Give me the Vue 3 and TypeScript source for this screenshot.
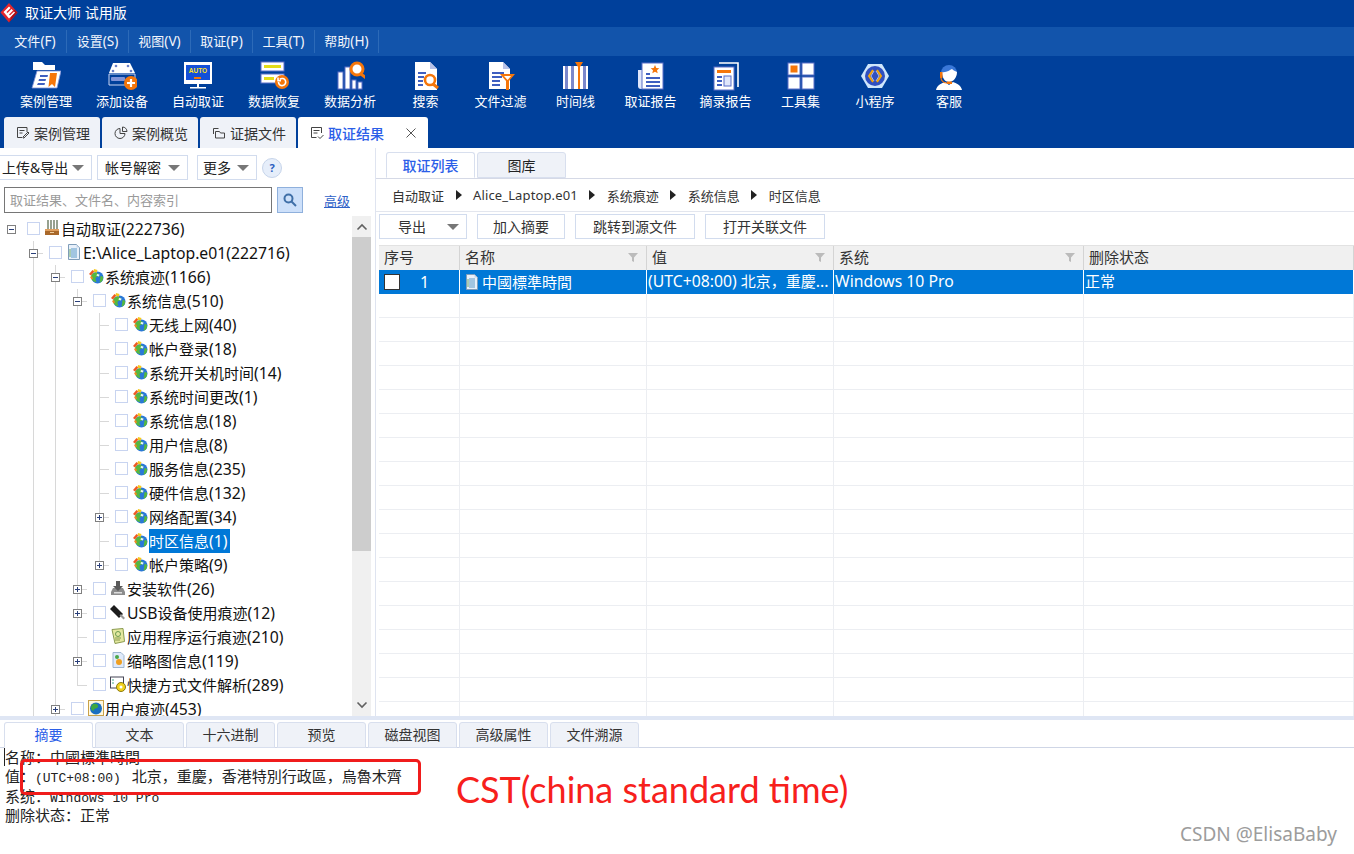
<script setup lang="ts">
interface TreeRow {
  label: string
  depth: number
  exp?: 'minus' | 'plus'
  icon: string
  last?: boolean
  selected?: boolean
}

const levels = (d: number) => {
  const out: number[] = []
  for (let i = 0; i < d; i++) out.push(i)
  return out
}

// latin runs are set a little larger than the CJK ones, as in the original UI font
const parts = (s: string) =>
  (s.match(/[\u2e80-\u9fff\uff00-\uffef]+|[^\u2e80-\u9fff\uff00-\uffef]+/g) ?? []).map((text) => ({
    text,
    latin: !/[\u2e80-\u9fff\uff00-\uffef]/.test(text)
  }))

const menus = ['文件(F)', '设置(S)', '视图(V)', '取证(P)', '工具(T)', '帮助(H)']

const B = '#5a6fc8'
const O = '#f5760a'
const toolIcons: Record<string, string> = {
  case: `<path d="M2 1h9l3 3h10v5H2z" fill="#fff"/><path d="M6 10h24l-4 17H1z" fill="#fff" stroke="#7f90d8" stroke-width=".8"/><path d="M9 14h8l-.5 2H9zM8 18h7l-.5 2H7.500zM7 22h7l-.5 2H6z" fill="#3f5fc0"/><path d="M19 12h7l-2 14-3-3-3.500 3z" fill="${O}"/>`,
  device: `<path d="M6 2h17l5 10H2z" fill="#fff"/><path d="M2 13h26v11H2z" fill="#00409b" stroke="#c9d4f2" stroke-width="1"/><circle cx="9" cy="5" r="1.300" fill="#6a7fc8"/><circle cx="21" cy="5" r="1.300" fill="#6a7fc8"/><circle cx="6" cy="10" r="1.300" fill="#6a7fc8"/><circle cx="24" cy="10" r="1.300" fill="#6a7fc8"/><rect x="4" y="16" width="14" height="4" rx="1" fill="#7f93d8"/><circle cx="24" cy="22" r="7" fill="${O}"/><path d="M24 18v8M20 22h8" stroke="#fff" stroke-width="2.200"/>`,
  auto: `<rect x="1" y="1" width="28" height="22" fill="#fff"/><rect x="3" y="4" width="24" height="15" fill="#1450d8"/><text x="15" y="11.500" text-anchor="middle" font-size="6.500" font-weight="700" font-family="Liberation Sans" fill="#ffe21c">AUTO</text><rect x="11" y="16" width="7" height="2" fill="${O}"/><path d="M14 23h2v3h-2zM7 26h16v1.500H7z" fill="#fff"/>`,
  recover: `<rect x="2" y="1" width="23" height="9" fill="#fff" stroke="${B}"/><rect x="5" y="4" width="17" height="3" fill="#e3dc1a"/><rect x="2" y="13" width="23" height="9" fill="#fff" stroke="${B}"/><rect x="5" y="16" width="10" height="3" fill="#e3dc1a"/><circle cx="23" cy="21" r="7" fill="${O}"/><path d="M19.500 21a3.600 3.600 0 1 0 1.400-2.800M19 16.600v3h3" fill="none" stroke="#fff" stroke-width="1.600"/>`,
  analysis: `<rect x="3" y="11" width="5" height="17" fill="#fff" stroke="${B}"/><rect x="10" y="6" width="5" height="22" fill="#fff" stroke="${B}"/><rect x="17" y="19" width="4" height="9" fill="#fff" stroke="${B}"/><rect x="23" y="21" width="4" height="7" fill="#fff" stroke="${B}"/><circle cx="22" cy="8" r="6" fill="#fff" stroke="${O}" stroke-width="3"/><path d="M26 13l5 4" stroke="${O}" stroke-width="3"/>`,
  search: `<path d="M4 1h15l7 7v21H4z" fill="#fff"/><path d="M19 1v7h7z" fill="#b8c2e8"/><path d="M7 11h8v2H7zM7 15h6v2H7zM7 19h5v2H7zM7 23h5v2H7z" fill="#3f5fc0"/><circle cx="19" cy="19" r="5" fill="#fff" stroke="${O}" stroke-width="2.600"/><path d="M22 23l5 4" stroke="${O}" stroke-width="3"/>`,
  filter: `<path d="M3 1h14l7 7v20H3z" fill="#fff"/><path d="M17 1v7h7z" fill="#b8c2e8"/><path d="M6 11h12v2H6zM6 15h10v2H6zM6 19h8v2H6zM6 23h8v2H6z" fill="#3f5fc0"/><path d="M14 13h15l-6 7v9h-3v-9z" fill="${O}"/><path d="M18 15h7l-3.500 4z" fill="#fff"/>`,
  time: `<rect x="2" y="5" width="25" height="23" fill="#fff"/><path d="M4 5h3v23H4zM10 5h3v23h-3zM22 5h3v23h-3z" fill="#7b88cc"/><path d="M14 1h8l-3 5h-2z" fill="${O}"/><rect x="17" y="5" width="2" height="23" fill="${O}"/>`,
  report: `<path d="M2 9h5v19H5a3 3 0 0 1-3-3z" fill="#dfe6fb"/><rect x="6" y="2" width="21" height="26" fill="#fff" stroke="${B}"/><path d="M10 12h4v2h-4zM10 16h14v2H10zM10 20h14v2H10zM10 24h14v2H10z" fill="#3f5fc0"/><path d="M19 4l1.300 3 3 .3-2.300 2 .7 3-2.700-1.600-2.700 1.600.7-3-2.300-2 3-.3z" fill="${O}"/>`,
  excerpt: `<path d="M8 2h19v24" fill="none" stroke="#fff" stroke-width="1.600"/><rect x="3" y="6" width="20" height="23" fill="#fff" stroke="${B}"/><rect x="6" y="9" width="14" height="3" fill="${O}"/><path d="M6 15h5v2H6zM6 19h5v2H6zM6 23h5v2H6z" fill="#3f5fc0"/><rect x="13" y="15" width="7" height="10" fill="#dfe6fb" stroke="${B}"/>`,
  tools: `<rect x="2" y="2" width="12" height="12" fill="#fff" stroke="${B}"/><rect x="4.500" y="4.500" width="7" height="7" fill="${O}"/><rect x="16" y="2" width="12" height="12" fill="#fff" stroke="${B}"/><rect x="2" y="16" width="12" height="12" fill="#fff" stroke="${B}"/><rect x="16" y="16" width="12" height="12" fill="#fff" stroke="${B}"/>`,
  mini: `<path d="M8 3h14l7 12-7 12H8L1 15z" fill="#cfe6fb"/><circle cx="15" cy="15" r="10" fill="#2f4fc0"/><path d="M13 9l-4 6 4 6M17 9l4 6-4 6" fill="none" stroke="#f5a50a" stroke-width="2"/><path d="M14 10l-3 5 3 5M16 10l3 5-3 5" fill="none" stroke="#fff" stroke-width=".6"/>`,
  service: `<path d="M7 12a8 8 0 0 1 16 0z" fill="#3a78d8"/><path d="M8 11c4 1 8-2 10-3 2 2 4 2 5 3 0 6-4 10-8 10s-7-4-7-10z" fill="#fff"/><path d="M2 29c1-5 6-7 9-8l4 3 4-3c3 1 8 3 9 8z" fill="#fff"/><path d="M6 11h2.500v6H6z" fill="${O}"/><path d="M7 17c0 3 3 5 6 5" fill="none" stroke="${O}" stroke-width="1.200"/><rect x="13" y="20.500" width="5" height="2.500" fill="${O}"/>`
}

const tools = [
  { label: '案例管理', icon: 'case' },
  { label: '添加设备', icon: 'device' },
  { label: '自动取证', icon: 'auto' },
  { label: '数据恢复', icon: 'recover' },
  { label: '数据分析', icon: 'analysis' },
  { label: '搜索', icon: 'search' },
  { label: '文件过滤', icon: 'filter' },
  { label: '时间线', icon: 'time' },
  { label: '取证报告', icon: 'report' },
  { label: '摘录报告', icon: 'excerpt' },
  { label: '工具集', icon: 'tools' },
  { label: '小程序', icon: 'mini' },
  { label: '客服', icon: 'service' }
]

const treeIcons: Record<string, string> = {
  root: `<path d="M3 0h2v9H3zM6 0h2v9H6zM9 0h2v9H9zM12 0h2v9h-2z" fill="#7e8a78"/><path d="M4 0v9M7 0v9M10 0v9M13 0v9" stroke="#d5d8c8" stroke-width=".6"/><path d="M1 9h14v6H1z" fill="#a9682a"/><path d="M1 9h14v2H1z" fill="#e0a060"/><path d="M6 12h4v1H6z" fill="#f0d0a0"/>`,
  doc: `<path d="M2.500 .5h8l3 3v12h-11z" fill="#e8f0fa" stroke="#7f9db9"/><path d="M10.500 .5v3h3z" fill="#c5d5e8"/><path d="M5 5h6M5 7h6M5 9h6M5 11h6M5 13h6" stroke="#5a9ac8"/><path d="M4 5v8" stroke="#6aa86a"/>`,
  globe: `<circle cx="9.500" cy="9.500" r="6" fill="#2a78d8"/><path d="M6 5c2-.5 4 0 5 1.500s-1 2-2.500 2.500-1 3 0 5c-3 0-5-2-5.500-4.500S5 5.500 6 5z" fill="#55b83f"/><path d="M13 8c1.500 0 2.500 1 2 3s-2 3.500-3 3.500.2-2 .2-3.500.2-3 .8-3z" fill="#55b83f"/><path d="M1 6L4.500 2l2 1.500L3 7.500z" fill="#ee5a22"/><path d="M6 1l3.500 1-1 3-3-1.500z" fill="#f6c81e"/><path d="M9 6l2.500.5-.5 2-2.500-.7z" fill="#e8f4ff"/><path d="M2 9l2-1 1 2.500-1.500 1z" fill="#f08a24"/>`,
  setup: `<path d="M3 8h10l2 4v3H1v-3z" fill="#8c8c8c"/><path d="M6 1h4v5h3l-5 5-5-5h3z" fill="#5a5a5a"/><rect x="4" y="12" width="8" height="1.500" fill="#ddd"/>`,
  usb: `<path d="M0 5l4-4 9 9-4 4z" fill="#1c1c1c"/><path d="M11 10l4 4-1.500 1.500-4-4z" fill="#999"/>`,
  app: `<path d="M2 1.500l11-1 1.500 13-9.500 2z" fill="#e4e8a0" stroke="#8a9a50"/><circle cx="8" cy="6" r="2.500" fill="none" stroke="#6a9a50"/><path d="M5 10h6M5 12h5" stroke="#8a9a50"/>`,
  thumb: `<path d="M3 .5h8l3 3v12H3z" fill="#dfeafa" stroke="#9db5cf"/><circle cx="7" cy="5" r="2" fill="#4aa84a"/><circle cx="9" cy="10" r="3" fill="#f0a020"/>`,
  link: `<rect x=".5" y="1" width="13" height="11" fill="#fff" stroke="#445"/><path d="M2 4h2M2 7h2" stroke="#4a8"/><circle cx="11" cy="11" r="4.500" fill="#f2d21c" stroke="#8a7a10"/><circle cx="11" cy="11" r="1.500" fill="#fff"/>`,
  user: `<rect x=".5" y=".5" width="15" height="15" fill="#fff8e0" stroke="#c9a24a"/><circle cx="8" cy="8.500" r="6" fill="#1b6fc0"/><path d="M5 4c3-1 6 1 5 3s-4 1-4 3-3 0-3-2 1-3 2-4z" fill="#3fa83f"/>`
}

const tree: TreeRow[] = [
  { label: '自动取证(222736)', depth: 0, exp: 'minus', icon: 'root' },
  { label: 'E:\\Alice_Laptop.e01(222716)', depth: 1, exp: 'minus', icon: 'doc' },
  { label: '系统痕迹(1166)', depth: 2, exp: 'minus', icon: 'globe' },
  { label: '系统信息(510)', depth: 3, exp: 'minus', icon: 'globe' },
  { label: '无线上网(40)', depth: 4, icon: 'globe' },
  { label: '帐户登录(18)', depth: 4, icon: 'globe' },
  { label: '系统开关机时间(14)', depth: 4, icon: 'globe' },
  { label: '系统时间更改(1)', depth: 4, icon: 'globe' },
  { label: '系统信息(18)', depth: 4, icon: 'globe' },
  { label: '用户信息(8)', depth: 4, icon: 'globe' },
  { label: '服务信息(235)', depth: 4, icon: 'globe' },
  { label: '硬件信息(132)', depth: 4, icon: 'globe' },
  { label: '网络配置(34)', depth: 4, exp: 'plus', icon: 'globe' },
  { label: '时区信息(1)', depth: 4, icon: 'globe', selected: true },
  { label: '帐户策略(9)', depth: 4, exp: 'plus', icon: 'globe', last: true },
  { label: '安装软件(26)', depth: 3, exp: 'plus', icon: 'setup' },
  { label: 'USB设备使用痕迹(12)', depth: 3, exp: 'plus', icon: 'usb' },
  { label: '应用程序运行痕迹(210)', depth: 3, icon: 'app' },
  { label: '缩略图信息(119)', depth: 3, exp: 'plus', icon: 'thumb' },
  { label: '快捷方式文件解析(289)', depth: 3, icon: 'link', last: true },
  { label: '用户痕迹(453)', depth: 2, exp: 'plus', icon: 'user' }
]

const crumbs = ['自动取证', 'Alice_Laptop.e01', '系统痕迹', '系统信息', '时区信息']
const columns = ['序号', '名称', '值', '系统', '删除状态']
const emptyRows = 18
const bottomTabs = ['摘要', '文本', '十六进制', '预览', '磁盘视图', '高级属性', '文件溯源']
</script>

<template>
  <div class="page">
    <header class="title-bar">
      <svg class="logo" viewBox="0 0 18 20" width="18" height="20">
        <path d="M9 0l8.500 9.500L9 19.500.5 9.500z" fill="#e2262c" />
        <path d="M9 19.500l8.500-10-3-3z" fill="#a90f18" />
        <path d="M3.500 9L9 3.500l1.500 1.500-4 4 1 1 4-4 1.500 1.500-4 4 1 1 4-4 1 1L9 15.500z" fill="#fff" />
      </svg>
      <span>取证大师 试用版</span>
    </header>

    <nav class="menu-bar">
      <span v-for="m in menus" :key="m" class="menu-item">
        <template v-for="p in parts(m)" :key="p.text"><span :class="{ lat: p.latin }">{{ p.text }}</span></template>
      </span>
    </nav>

    <div class="tool-bar">
      <div v-for="t in tools" :key="t.label" class="tool">
        <svg viewBox="0 0 30 30" width="30" height="30" v-html="toolIcons[t.icon]"></svg>
        <span>{{ t.label }}</span>
      </div>
    </div>

    <div class="main-tabs">
      <div class="main-tab">
        <svg viewBox="0 0 14 14" width="14" height="14" fill="none" stroke="#444">
          <path d="M11 6V1.500H1.500v10H6M3.500 4.500h5M3.500 7h3M7 11l5-5 1 1-5 5H7z" />
        </svg>
        案例管理
      </div>
      <div class="main-tab">
        <svg viewBox="0 0 14 14" width="14" height="14" fill="none" stroke="#444">
          <path d="M6 2.500a5 5 0 1 0 5 5H6zM8.500 1a4.500 4.500 0 0 1 4.500 4.500H8.500z" />
        </svg>
        案例概览
      </div>
      <div class="main-tab">
        <svg viewBox="0 0 14 14" width="14" height="14" fill="none" stroke="#444">
          <path d="M1.500 8V2.500h5M3.500 5.500h4l1 1.500h4v5h-9z" />
        </svg>
        证据文件
      </div>
      <div class="main-tab active">
        <svg viewBox="0 0 14 14" width="14" height="14" fill="none" stroke="#444">
          <path d="M11.500 7V1.500h-10v10h5M3.500 4.500h6M3.500 7h4M8 10.500l2 2 3.500-3.500" />
        </svg>
        取证结果
        <svg class="close" viewBox="0 0 10 10" width="10" height="10" stroke="#555" fill="none">
          <path d="M.5.5l9 9M9.500.5l-9 9" />
        </svg>
      </div>
    </div>

    <main class="content">
      <section class="left">
        <div class="left-tools">
          <button class="drop first"><span>上传&amp;导出</span><i class="caret"></i></button>
          <button class="drop second"><span>帐号解密</span><i class="caret"></i></button>
          <button class="drop third"><span>更多</span><i class="caret"></i></button>
          <span class="help">?</span>
        </div>
        <div class="search-row">
          <div class="search-input">取证结果、文件名、内容索引</div>
          <div class="search-btn">
            <svg viewBox="0 0 14 14" width="14" height="14" fill="none" stroke="#3f6fa8" stroke-width="2">
              <circle cx="5.500" cy="5.500" r="4" />
              <path d="M8.500 8.500l4.500 4.500" />
            </svg>
          </div>
          <a class="advanced">高级</a>
        </div>
        <div class="tree-wrap">
          <div class="tree">
            <div v-for="r in tree" :key="r.label" class="tree-row">
              <span v-for="l in levels(r.depth)" :key="l" class="lvl" :class="{ line: l > 0 }"></span>
              <span class="lvl own" :class="{ stub: r.depth > 0, full: r.depth > 0 && !r.last, half: r.last }">
                <span v-if="r.exp" class="exp">
                  <i class="h"></i>
                  <i v-if="r.exp === 'plus'" class="v"></i>
                </span>
              </span>
              <span class="check"></span>
              <svg class="node-icon" viewBox="0 0 16 16" width="16" height="16" v-html="treeIcons[r.icon]"></svg>
              <span class="label" :class="{ selected: r.selected }">
                <template v-for="p in parts(r.label)" :key="p.text"><span :class="{ lat: p.latin }">{{ p.text }}</span></template>
              </span>
            </div>
          </div>
          <div class="scroll">
            <svg class="arrow" viewBox="0 0 12 8" width="12" height="8" fill="none" stroke="#606060" stroke-width="1.600">
              <path d="M1.500 6.500L6 2l4.500 4.500" />
            </svg>
            <div class="thumb"></div>
            <svg class="arrow arrow-down" viewBox="0 0 12 8" width="12" height="8" fill="none" stroke="#606060" stroke-width="1.600">
              <path d="M1.500 1.500L6 6l4.500-4.500" />
            </svg>
          </div>
        </div>
      </section>

      <section class="right">
        <div class="sub-tabs">
          <div class="sub-tab active">取证列表</div>
          <div class="sub-tab">图库</div>
        </div>
        <div class="crumbs">
          <template v-for="(c, i) in crumbs" :key="c">
            <i v-if="i > 0" class="crumb-arrow"></i>
            <span :class="{ 'crumb-file': i === 1 }">{{ c }}</span>
          </template>
        </div>
        <div class="actions">
          <button class="act export"><span>导出</span><i class="caret"></i></button>
          <button class="act w88"><span>加入摘要</span></button>
          <button class="act w120"><span>跳转到源文件</span></button>
          <button class="act w120"><span>打开关联文件</span></button>
        </div>
        <div class="table">
          <div class="thead grid-cols">
            <div v-for="(c, i) in columns" :key="c" class="th">
              {{ c }}
              <svg v-if="i > 0 && i < 4" class="funnel" viewBox="0 0 10 10" width="10" height="10">
                <path d="M0 1h10L6 5.500V10L4 9V5.500z" fill="#bbb" />
              </svg>
            </div>
          </div>
          <div class="trow selected grid-cols">
            <div class="td seq"><span class="box"></span><span class="num">1</span></div>
            <div class="td name">
              <svg viewBox="0 0 16 16" width="16" height="16" v-html="treeIcons.doc"></svg>
              中國標準時間
            </div>
            <div class="td"><span class="lat">(UTC+08:00) </span>北京，重慶<span class="lat">...</span></div>
            <div class="td"><span class="lat">Windows 10 Pro</span></div>
            <div class="td">正常</div>
          </div>
          <div v-for="n in emptyRows" :key="n" class="trow grid-cols">
            <div v-for="c in 5" :key="c" class="td"></div>
          </div>
        </div>
      </section>
    </main>

    <footer class="bottom-pane">
      <div class="bottom-tabs">
        <div v-for="(t, i) in bottomTabs" :key="t" class="bottom-tab" :class="{ active: i === 0 }">{{ t }}</div>
      </div>
      <div class="detail">
        <i class="cursor"></i>
        <div class="line-row">名称：中國標準時間</div>
        <div class="line-row">值：<span class="mono utc">(UTC+08:00) </span>北京，重慶，香港特別行政區，烏魯木齊</div>
        <div class="line-row">系统：<span class="mono">Windows 10 Pro</span></div>
        <div class="line-row">删除状态：正常</div>
      </div>
    </footer>

    <div class="mark-box"></div>
    <div class="mark-text">CST(china standard time)</div>
    <div class="watermark">CSDN @ElisaBaby</div>
  </div>
</template>

<style>
html,
body {
  margin: 0;
  overflow: hidden;
}
</style>

<style scoped>
.page {
  position: relative;
  width: 1354px;
  height: 854px;
  display: flex;
  flex-direction: column;
  overflow: hidden;
  background: #fff;
  color: #222;
  font-family: "Noto Sans", "Noto Sans CJK SC", sans-serif;
  font-size: 14px;
}

button {
  font: inherit;
  color: inherit;
  background: #fff;
  padding: 0;
}

button span {
  position: relative;
  top: -1px;
}

.lat {
  font-size: 1.05em;
}

/* title + menu */
.title-bar {
  height: 27px;
  flex: none;
  display: flex;
  align-items: center;
  gap: 7px;
  background: #00409b;
  color: #fff;
  font-size: 14px;
}

.title-bar span {
  margin-top: -4px;
}

.logo {
  margin-top: -1px;
}

.menu-bar {
  height: 29px;
  flex: none;
  display: flex;
  align-items: center;
  background: #1254ab;
  color: #f2f6fc;
  font-size: 13px;
}

.menu-item {
  width: 62px;
  height: 23px;
  line-height: 21px;
  text-align: center;
  border-right: 1px solid #2c6ab8;
  box-sizing: border-box;
}

.menu-item:first-child {
  width: 67px;
  padding-left: 4px;
}

.menu-item:last-child {
  width: 64px;
}

/* toolbar */
.tool-bar {
  height: 61px;
  flex: none;
  display: flex;
  padding-left: 8px;
  background: #00409b;
  color: #fff;
  font-size: 13px;
}

.tool {
  width: 76px;
  flex: none;
  display: flex;
  flex-direction: column;
  align-items: center;
  padding-top: 5px;
  line-height: 18px;
}

.tool:nth-child(n + 6) {
  width: 75px;
}

.tool:nth-child(n + 12) {
  width: 74px;
}

.tool span {
  margin-top: 1px;
}

.main-tabs {
  height: 31px;
  flex: none;
  display: flex;
  gap: 2px;
  padding-left: 4px;
  background: #00409b;
}

.main-tab {
  width: 96px;
  display: flex;
  align-items: center;
  gap: 4px;
  padding-left: 12px;
  box-sizing: border-box;
  background: #eff2f8;
  border-radius: 3px 3px 0 0;
  color: #333;
}

.main-tab.active {
  width: 130px;
  background: #fff;
  color: #2b5ee8;
  font-weight: 500;
}

.close {
  margin-left: 18px;
}

/* main area */
.content {
  flex: 1;
  min-height: 0;
  display: flex;
}

.left {
  width: 372px;
  flex: none;
  display: flex;
  flex-direction: column;
  overflow: hidden;
}

.left-tools {
  height: 25px;
  margin-top: 7px;
  display: flex;
  align-items: center;
}

.drop {
  height: 25px;
  box-sizing: border-box;
  border: 1px solid #d2dcee;
  display: flex;
  align-items: center;
  justify-content: space-between;
  padding-right: 7px;
}

.first {
  width: 94px;
  margin-left: -2px;
  padding-left: 3px;
}

.second {
  width: 91px;
  margin-left: 5px;
  padding-left: 7px;
}

.third {
  width: 60px;
  margin-left: 9px;
  padding-left: 5px;
}

.caret {
  width: 0;
  height: 0;
  border-left: 6px solid transparent;
  border-right: 6px solid transparent;
  border-top: 6px solid #777;
}

.help {
  width: 18px;
  height: 18px;
  margin-left: 5px;
  border-radius: 50%;
  background: #e6eefa;
  border: 1px solid #c6d4ea;
  text-align: center;
  line-height: 18px;
  font-size: 11px;
  font-weight: 700;
  color: #2b5ec0;
}

.search-row {
  height: 26px;
  margin-top: 7px;
  padding-left: 4px;
  display: flex;
  align-items: center;
}

.search-input {
  width: 268px;
  height: 26px;
  box-sizing: border-box;
  border: 1px solid #767676;
  padding-left: 5px;
  line-height: 24px;
  font-size: 13px;
  color: #9a9a9a;
}

.search-btn {
  width: 26px;
  height: 26px;
  margin-left: 5px;
  box-sizing: border-box;
  background: #cde0fa;
  border: 1px solid #8fb0dc;
  display: flex;
  align-items: center;
  justify-content: center;
}

.advanced {
  margin-left: 21px;
  color: #2f62c8;
  text-decoration: underline;
  font-size: 13px;
}

.tree-wrap {
  flex: 1;
  min-height: 0;
  margin-top: 3px;
  display: flex;
}

.tree {
  width: 352px;
  flex: none;
  overflow: hidden;
  padding-top: 1px;
  color: #111;
  font-size: 15px;
}

.tree-row {
  height: 24px;
  display: flex;
  align-items: center;
  white-space: nowrap;
}

.lvl {
  position: relative;
  width: 22px;
  height: 24px;
  flex: none;
}

.lvl.line::before,
.own.full::before {
  content: "";
  position: absolute;
  left: 11px;
  top: 0;
  bottom: 0;
  width: 1px;
  background: #d8d8d8;
}

.own.half::before {
  content: "";
  position: absolute;
  left: 11px;
  top: 0;
  height: 12px;
  width: 1px;
  background: #d8d8d8;
}

.own.stub::after {
  content: "";
  position: absolute;
  left: 11px;
  top: 12px;
  width: 10px;
  height: 1px;
  background: #d8d8d8;
}

.exp {
  position: absolute;
  z-index: 1;
  left: 7px;
  top: 8px;
  width: 9px;
  height: 9px;
  box-sizing: border-box;
  border: 1px solid #808080;
  background: #fff;
}

.exp .h {
  position: absolute;
  left: 1px;
  top: 3px;
  width: 5px;
  height: 1px;
  background: #2a3f7a;
}

.exp .v {
  position: absolute;
  left: 3px;
  top: 1px;
  width: 1px;
  height: 5px;
  background: #2a3f7a;
}

.check {
  flex: none;
  width: 11px;
  height: 11px;
  margin-left: 5px;
  border: 1px solid #c8d4f0;
  margin-top: -1px;
}

.node-icon {
  flex: none;
  margin-left: 4px;
  margin-top: -2px;
}

.label {
  margin-left: 1px;
  line-height: 24px;
  height: 24px;
}

.label.selected {
  background: #0078d7;
  color: #fff;
  padding-right: 3px;
}

.scroll {
  position: relative;
  width: 19px;
  flex: none;
  display: flex;
  flex-direction: column;
  align-items: center;
  background: #f0f0f0;
}

.arrow {
  flex: none;
  margin-top: 7px;
}

.arrow.arrow-down {
  margin-top: auto;
  margin-bottom: 7px;
}

.thumb {
  width: 19px;
  height: 314px;
  margin-top: 6px;
  background: #cdcdcd;
}

/* right side */
.right {
  flex: 1;
  min-width: 0;
  margin-left: 3px;
  border-left: 1px solid #dfe4f0;
  display: flex;
  flex-direction: column;
}

.sub-tabs {
  height: 26px;
  margin-top: 4px;
  padding-left: 10px;
  display: flex;
  gap: 2px;
  border-bottom: 1px solid #d5d9e6;
}

.sub-tab {
  width: 89px;
  height: 26px;
  box-sizing: border-box;
  border: 1px solid #d8dfee;
  border-radius: 3px 3px 0 0;
  background: #eff2f8;
  text-align: center;
  line-height: 25px;
}

.sub-tab.active {
  border-bottom-color: #fff;
  background: #fff;
  color: #2b5ee8;
  font-weight: 500;
}

.crumbs {
  height: 32px;
  padding-left: 16px;
  display: flex;
  align-items: center;
  font-size: 13px;
  border-bottom: 1px solid #e3e6ee;
  color: #333;
}

.crumb-file {
  letter-spacing: 0.13px;
}

.crumb-arrow {
  width: 0;
  height: 0;
  margin: 0 11.5px;
  border-top: 5px solid transparent;
  border-bottom: 5px solid transparent;
  border-left: 6px solid #222;
}

.actions {
  height: 25px;
  margin-top: 2px;
  padding-left: 3px;
  display: flex;
  gap: 10px;
}

.act {
  height: 25px;
  box-sizing: border-box;
  border: 1px solid #d2dcee;
  color: #333;
}

.export {
  width: 88px;
  padding: 0 7px 0 18px;
  display: flex;
  align-items: center;
  justify-content: space-between;
}

.w88 {
  width: 88px;
}

.w120 {
  width: 120px;
}

.table {
  flex: 1;
  min-height: 0;
  margin-top: 6px;
  margin-left: 3px;
  overflow: hidden;
  font-size: 15px;
}

.grid-cols {
  display: grid;
  grid-template-columns: 81px 187px 187px 250px 1fr;
}

.thead {
  height: 25px;
  background: #f0f0f0;
  border-top: 1px solid #e2e2e2;
  box-sizing: border-box;
  color: #333;
}

.th {
  position: relative;
  padding-left: 5px;
  line-height: 22px;
  border-right: 1px solid #d4d4d4;
}

.funnel {
  position: absolute;
  top: 6px;
  right: 8px;
}

.trow {
  height: 24px;
  box-sizing: border-box;
  border-bottom: 1px solid #eceef2;
}

.td {
  border-right: 1px solid #eceef2;
  padding-left: 1px;
  white-space: nowrap;
  overflow: hidden;
  line-height: 23px;
}

.trow.selected {
  background: #0078d7;
  color: #fff;
  border-bottom: none;
}

.trow.selected .td {
  border-right-color: #fff;
}

.seq {
  display: flex;
  align-items: center;
  padding-left: 5px;
}

.box {
  width: 14px;
  height: 14px;
  background: #fff;
  border: 1px solid #333;
}

.num {
  margin-left: 20px;
  font-size: 16px;
}

.name {
  display: flex;
  align-items: center;
  gap: 2px;
  padding-left: 4px;
}

/* bottom pane */
.bottom-pane {
  height: 138px;
  flex: none;
  box-sizing: border-box;
  border-top: 4px solid #dfe6f4;
}

.bottom-tabs {
  height: 28px;
  box-sizing: border-box;
  padding: 2px 0 0 4px;
  display: flex;
  gap: 2px;
  border-bottom: 1px solid #cfd6e6;
}

.bottom-tab {
  width: 89px;
  height: 26px;
  box-sizing: border-box;
  border: 1px solid #d8dfee;
  border-radius: 3px 3px 0 0;
  background: #eff2f8;
  text-align: center;
  line-height: 24px;
  color: #333;
}

.bottom-tab.active {
  background: #fff;
  border-bottom-color: #fff;
  color: #2b5ee8;
}

.detail {
  position: relative;
  padding-left: 5px;
  font-size: 15px;
  color: #222;
}

.line-row {
  height: 19.3px;
  line-height: 19.3px;
  white-space: nowrap;
}

.mono {
  font-family: "Liberation Mono", monospace;
  font-size: 13px;
}

.utc {
  margin-right: 3px;
}

.cursor {
  position: absolute;
  left: 4px;
  top: 0;
  width: 1px;
  height: 18px;
  background: #222;
}

/* annotations on top of the screenshot */
.mark-box {
  position: absolute;
  left: 20px;
  top: 759px;
  width: 401px;
  height: 36px;
  box-sizing: border-box;
  border: 3px solid #f01c1c;
  border-radius: 5px;
}

.mark-text {
  position: absolute;
  left: 456px;
  top: 766px;
  font-family: Lato, sans-serif;
  font-size: 36px;
  line-height: 46px;
  color: #f7201c;
  white-space: nowrap;
}

.watermark {
  position: absolute;
  left: 1180px;
  top: 821px;
  font-size: 19px;
  line-height: 26px;
  color: #9c9c9c;
  white-space: nowrap;
}
</style>
